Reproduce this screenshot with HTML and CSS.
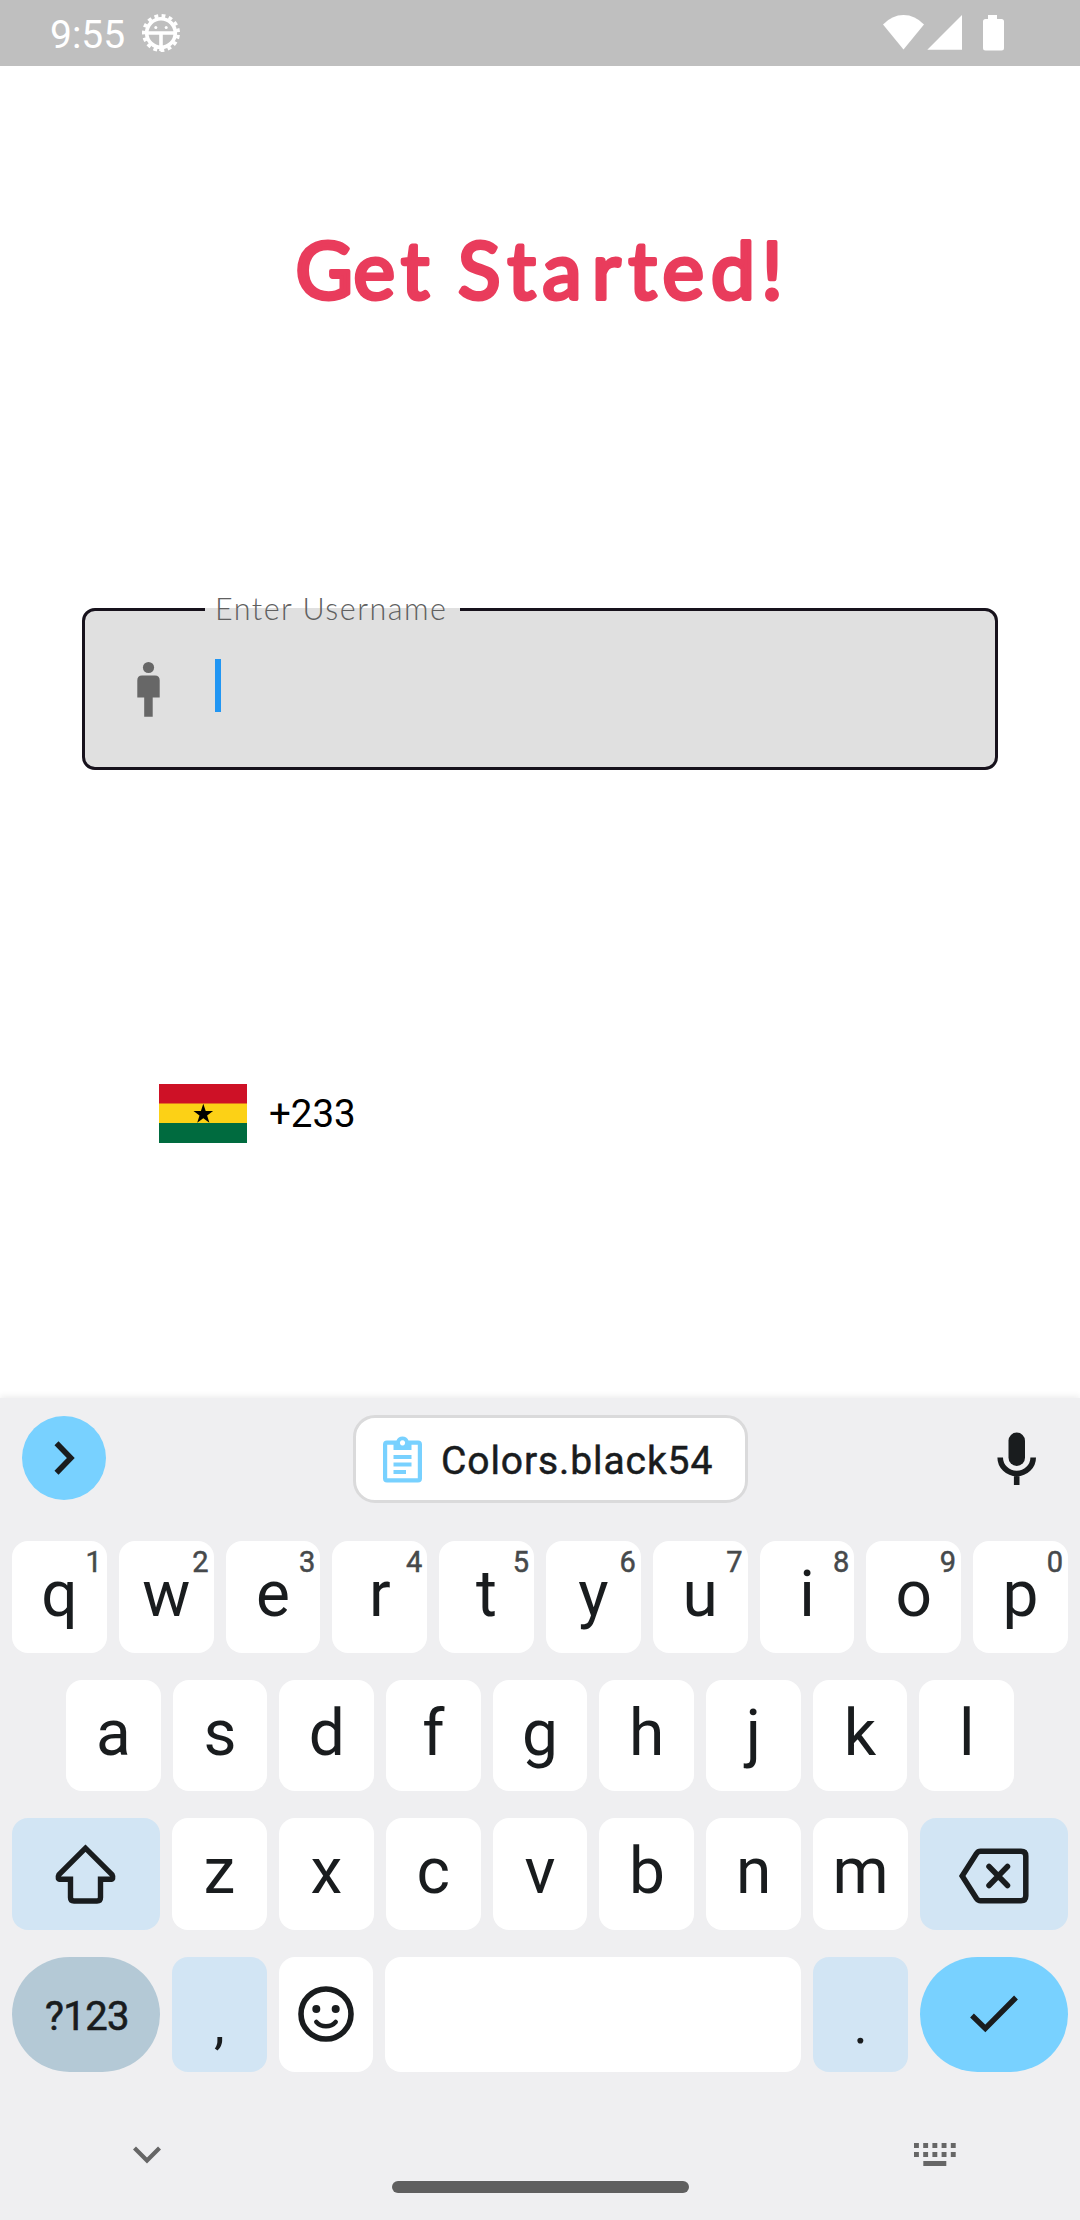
FILE: index.html
```html
<!DOCTYPE html>
<html lang="en">
<head>
<meta charset="utf-8">
<title>Get Started</title>
<link rel="stylesheet" href="styles.css">
</head>
<body>
<header class="status">
  <span class="clock">9:55</span>
  <svg class="bug" viewBox="-20 -20 40 40" width="40" height="40" fill="none" stroke="#fff">
    <circle r="14.3" stroke-width="3.6"/>
    <circle r="17.3" stroke-width="3.4" stroke-dasharray="3.8 3.447" stroke-dashoffset="-1.9" stroke-linecap="butt"/>
    <path d="M-13 0H13M0 0V18" stroke-width="3.6"/>
    <circle cx="-5.2" cy="-5.6" r="1.5" fill="#fff" stroke="none"/>
    <circle cx="5.2" cy="-5.6" r="1.5" fill="#fff" stroke="none"/>
  </svg>
  <svg class="signals" viewBox="0 0 121 36" width="121" height="36" fill="#fff">
    <path d="M0 9.5Q9 0 20.5 0T41 9.5L20.5 34.5Z"/>
    <path d="M44.3 34.8L79 0V34.8Z"/>
    <path d="M105 0h9v4h4.500q2.500 0 2.500 2.500v26.500q0 2.500-2.500 2.500h-16q-2.500 0-2.500-2.500v-26.500q0-2.500 2.500-2.500h2.500z"/>
  </svg>
</header>

<main class="form">
  <h1 class="title">
    <svg width="540" height="100" viewBox="0 0 540 100"><text y="72" x="25.500 83.500 131 170 188 237.500 272.500 322 358.500 392.500 441 491.500">Get Started!</text></svg>
  </h1>

  <fieldset class="field">
    <legend class="field-label">Enter Username</legend>
    <svg class="person" width="24" height="58" viewBox="0 0 24 58" fill="#676767">
      <circle cx="11.500" cy="7.500" r="5.600"/>
      <path d="M5 15.500h13q4.700 0 4.700 4.700v17.300h-7v19.300h-8.500v-19.300h-6.900v-17.300q0-4.700 4.700-4.700z"/>
    </svg>
    <span class="caret"></span>
  </fieldset>

  <div class="phone">
    <svg width="88" height="59" viewBox="0 0 88 59">
      <path fill="#ce1126" d="M0 0h88v20H0z"/>
      <path fill="#fcd116" d="M0 19.500h88v20H0z"/>
      <path fill="#006b3f" d="M0 39h88v20H0z"/>
      <path d="M44.300 19.800L46.700 27H54.100L48.100 31.500L50.400 38.700L44.300 34.300L38.200 38.700L40.500 31.500L34.500 27H41.900Z"/>
    </svg>
    <span class="code">+233</span>
  </div>
</main>

<section class="keyboard">
  <div class="toolbar">
    <span class="expand">
      <svg width="24" height="36" viewBox="0 0 24 36" fill="none" stroke="#191c1e" stroke-width="5.600"><path d="M3.500 3.300L17.800 18L3.500 32.700"/></svg>
    </span>
    <span class="chip">
      <svg width="39" height="47" viewBox="0 0 39 47" fill="#78d1ff">
        <path fill-rule="evenodd" d="M4 4.500H13.500A6.500 6.500 0 0 1 25.500 4.500H35q4 0 4 4V42.500q0 4-4 4H4q-4 0-4-4V8.500q0-4 4-4ZM4.200 8.700V42.300H34.800V8.700H28.500V14H10.500V8.700ZM19.500 4.300a2.600 2.600 0 1 0 .01 0Z"/>
        <path d="M10.500 19h18v4h-18zM10.500 26.500h18v4h-18zM10.500 34h12.500v4h-12.500z"/>
      </svg>
      <span class="chip-text">Colors.black54</span>
    </span>
    <svg class="mic" width="40" height="54" viewBox="0 0 40 54" fill="none" stroke="#191c1e">
      <rect x="11.500" y=".5" width="16.500" height="33.500" rx="8.250" fill="#191c1e" stroke="none"/>
      <path d="M3.200 25.500a16.500 16 0 0 0 33 0M19.700 42V53" stroke-width="5.600"/>
    </svg>
  </div>

  <div class="row">
    <span class="key">q<sup>1</sup></span><span class="key">w<sup>2</sup></span><span class="key">e<sup>3</sup></span><span class="key">r<sup>4</sup></span><span class="key">t<sup>5</sup></span><span class="key">y<sup>6</sup></span><span class="key">u<sup>7</sup></span><span class="key">i<sup>8</sup></span><span class="key">o<sup>9</sup></span><span class="key">p<sup>0</sup></span>
  </div>
  <div class="row row-home">
    <span class="key">a</span><span class="key">s</span><span class="key">d</span><span class="key">f</span><span class="key">g</span><span class="key">h</span><span class="key">j</span><span class="key">k</span><span class="key">l</span>
  </div>
  <div class="row">
    <span class="key wide soft">
      <svg width="64" height="62" viewBox="0 0 64 62" fill="none" stroke="#191c1e" stroke-width="5.400"><path d="M31.500 5.200L5 31.500Q2.500 36.300 7 36.300H16.500V54.500Q16.500 58 20 58H43Q46.500 58 46.500 54.500V36.300H56Q60.500 36.300 58 31.500Z"/></svg>
    </span>
    <span class="key">z</span><span class="key">x</span><span class="key">c</span><span class="key">v</span><span class="key">b</span><span class="key">n</span><span class="key">m</span>
    <span class="key wide soft">
      <svg class="erase" width="72" height="56" viewBox="0 0 72 56" fill="none" stroke="#191c1e" stroke-width="5.500"><path d="M4.200 28L18.500 5.500Q20 3.300 22.500 3.300H63Q67.800 3.300 67.800 8V48Q67.800 52.700 63 52.700H22.500Q20 52.700 18.500 50.500Z"/><path stroke-linecap="round" d="M31 18.500L49.500 37.500M49.500 18.500L31 37.500"/></svg>
    </span>
  </div>
  <div class="row row-last">
    <span class="key wide symbols">?123</span>
    <span class="key soft punct">,</span>
    <span class="key">
      <svg class="smile" width="58" height="58" viewBox="-29 -29 58 58" fill="none" stroke="#191c1e" stroke-width="5.600"><circle r="25"/><g fill="#191c1e" stroke="none"><circle cx="-9.700" cy="-5" r="4"/><circle cx="9.700" cy="-5" r="4"/></g><path stroke-width="4.500" stroke-linecap="round" d="M-9.700 8Q-6 12.300 0 12.300T9.700 8"/></svg>
    </span>
    <span class="key space"></span>
    <span class="key soft punct">.</span>
    <span class="key wide enter">
      <svg width="50" height="40" viewBox="0 0 50 40" fill="none" stroke="#191c1e" stroke-width="5.400"><path d="M3 21.500L16.300 34.500L47 3.500"/></svg>
    </span>
  </div>

  <footer class="nav">
    <svg class="collapse" width="30" height="20" viewBox="0 0 30 20" fill="none" stroke="#666" stroke-width="4.200"><path d="M2.500 3L15 15.500L27.500 3"/></svg>
    <span class="pill"></span>
    <svg class="layouts" width="43" height="24" viewBox="0 0 43 24" fill="none" stroke="#666" stroke-width="5"><path stroke-dasharray="4.900 4.300" d="M0 2.500H43M0 11.500H43"/><path d="M9.300 20.500H32.300"/></svg>
  </footer>
</section>
</body>
</html>
```
FILE: styles.css
```css
* { box-sizing: border-box; }

body {
  margin: 0;
  width: 1080px;
  height: 2220px;
  display: flex;
  flex-direction: column;
  background: #fff;
  font-family: Roboto, "Liberation Sans", sans-serif;
  overflow: hidden;
}

svg { display: block; flex: none; }

.status {
  height: 66px;
  padding: 0 76px 0 50px;
  display: flex;
  align-items: center;
  background: #bfbfbf;
  color: #fff;
}
.clock { font-size: 39px; line-height: 46px; padding-top: 3px; }
.bug { margin-left: 16px; }
.signals { margin-left: auto; }

.form { flex: 1; }

.title { margin: 161px 0 0 270px; width: 540px; height: 100px; }
.title text {
  font: 400 78.5px Lato, "Open Sans", sans-serif;
  fill: #e93c5c;
  stroke: #e93c5c;
  stroke-width: 4px;
  stroke-linejoin: round;
}

.field {
  margin: 263px 82px 0;
  height: 180px;
  padding: 0 0 0 52px;
  border: 3px solid #17121c;
  border-radius: 13px;
  background: #e0e0e0;
  display: flex;
}
.field-label {
  margin-left: 68px;
  padding: 0 0 2px 10px;
  width: 255px;
  font: 300 30.5px/36px Lato, "Open Sans", sans-serif;
  letter-spacing: 1.5px;
  color: #606060;
  white-space: nowrap;
}
.person { margin-top: 32px; }
.caret { width: 6px; height: 53px; margin: 31px 0 0 54px; background: #2196f3; }

.phone { margin: 314px 0 0 159px; display: flex; align-items: center; gap: 22px; }
.code { font-size: 38.5px; line-height: 44px; color: #000; }

.keyboard {
  height: 822px;
  padding: 17px 12px 0;
  background: #efeff1;
  box-shadow: 0 -2px 6px rgba(0, 0, 0, .07);
  display: flex;
  flex-direction: column;
  color: #191c1e;
}
.toolbar {
  height: 88px;
  margin-bottom: 38px;
  padding: 0 31px 0 10px;
  display: flex;
  align-items: center;
}
.expand {
  width: 84px;
  height: 84px;
  margin-bottom: 2px;
  padding-left: 2px;
  border-radius: 50%;
  background: #78d1ff;
  display: flex;
  align-items: center;
  justify-content: center;
}
.chip {
  width: 395px;
  height: 88px;
  margin-left: 247px;
  padding-left: 27px;
  border: 3px solid #dadadb;
  border-radius: 22px;
  background: #fff;
  display: flex;
  align-items: center;
}
.chip-text {
  margin-left: 19px;
  padding-top: 4px;
  font-size: 39px;
  letter-spacing: .9px;
  -webkit-text-stroke: .5px currentColor;
}
.mic { margin-left: auto; }

.row { height: 111.7px; margin-bottom: 27px; display: flex; gap: 12px; }
.row-home { padding: 0 54px; }
.row-last { height: 115px; }
.key {
  position: relative;
  flex: 1;
  padding-bottom: 4px;
  display: flex;
  align-items: center;
  justify-content: center;
  background: #fff;
  border-radius: 16px;
  font-size: 64px;
  line-height: 76px;
}
.key sup {
  position: absolute;
  top: 4px;
  right: 5px;
  font-size: 29px;
  line-height: 34px;
  color: #46494b;
  -webkit-text-stroke: .5px currentColor;
}
.wide { flex: 0 0 148px; }
.soft { background: #d2e5f4; }
.wide svg { margin-top: 3px; }
.wide .erase { margin: 8px 0 0; }
.symbols {
  padding: 4px 0 0 2px;
  border-radius: 58px;
  background: #b4c9d6;
  font-size: 40px;
  letter-spacing: -.6px;
  -webkit-text-stroke: .6px currentColor;
}
.punct { padding: 20px 0 0; font-size: 54px; }
.smile { margin-top: 2px; }
.space { flex: 0 0 416px; }
.enter { border-radius: 58px; background: #78d1ff; }

.nav {
  height: 121px;
  padding: 43px 111px 0 120px;
  display: flex;
  justify-content: space-between;
  align-items: flex-start;
}
.collapse { margin-top: 3px; }
.layouts { margin-top: 1px; }
.pill { width: 297px; height: 12px; margin: 39px 0 0 4px; border-radius: 6px; background: #5f5f5f; }
```
